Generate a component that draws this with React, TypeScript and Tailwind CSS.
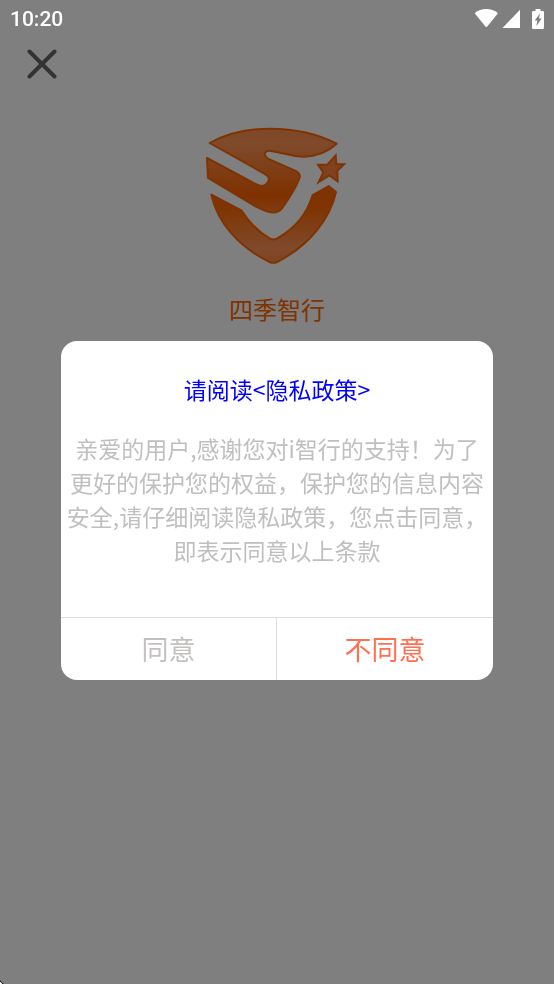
import { useState } from 'react'

const StatusBar = () => (
  <div className="relative z-20 flex h-[38px] items-center justify-between px-[10px] text-white">
    <span className="font-['Roboto',sans-serif] text-[21px] font-medium leading-[38px]">10:20</span>
    <svg className="h-5 w-[70px]" viewBox="0 0 70 20" fill="currentColor" aria-hidden="true">
      <path d="M0.7 4.2C4 1.3 8 0 12.3 0S20.5 1.3 24 4.2L13 17.8Q12.3 18.5 11.6 17.8Z" />
      <path d="M46 0.8V19H28.5Z" />
      <path
        fillRule="evenodd"
        d="M61.5 0H66.5V2H68.8Q70 2 70 3.2V18.8Q70 20 68.8 20H59.2Q58 20 58 18.8V3.2Q58 2 59.2 2H61.5ZM66 4.5L60.7 11.6H63.4L62.4 17.2L67.6 9.6H64.9Z"
      />
    </svg>
  </div>
)

const Logo = () => (
  <svg className="h-[138px] w-[142px]" viewBox="48 36 426 414" role="img" aria-label="四季智行">
    <defs>
      <linearGradient id="swoosh" gradientUnits="userSpaceOnUse" x1="0" y1="40" x2="0" y2="292">
        <stop offset="0" stopColor="#ff9250" />
        <stop offset="0.2" stopColor="#ff9456" />
        <stop offset="0.8" stopColor="#ff6200" />
        <stop offset="1" stopColor="#ff7a2a" />
      </linearGradient>
      <linearGradient id="base" gradientUnits="userSpaceOnUse" x1="0" y1="212" x2="0" y2="446">
        <stop offset="0" stopColor="#ff6600" />
        <stop offset="0.25" stopColor="#ff6600" />
        <stop offset="0.8" stopColor="#ff9456" />
        <stop offset="1" stopColor="#ff8a48" />
      </linearGradient>
    </defs>
    <g stroke="#ff6600" strokeWidth="6" strokeLinejoin="round">
      <path
        fill="url(#swoosh)"
        d="M59 84C112 54 176 41 241 41C315 41 382 56 440 86C414 110 380 124 340 125C326 125 314 123 302 120L248 109C232 105 223 110 225 121C227 128 232 131 240 134L315 167C328 173 332 181 328 191C316 221 297 251 276 280C267 291 253 295 235 290C222 287 210 281 198 275L54 189L51 129L196 207C212 216 226 213 233 202C240 190 236 183 225 177Z"
      />
      <path
        fill="url(#base)"
        d="M64 239L154 286C180 326 206 352 240 371Q251 376 262 370C318 337 350 298 368 240L416 213L438 231C421 311 356 393 261 441Q250 446 239 441C145 396 82 321 64 239Z"
      />
      <path
        fill="#ff8240"
        strokeLinejoin="miter"
        d="M437 121L439 148H462L442 167L443 199L418 181L386 201L400 172L384 149H412Z"
      />
    </g>
  </svg>
)

type PrivacyDialogProps = {
  onAnswer: (agreed: boolean) => void
}

const PrivacyDialog = ({ onAnswer }: PrivacyDialogProps) => (
  <div className="fixed inset-0 z-10 flex items-center justify-center bg-black/50 pt-[37px]">
    <div
      role="dialog"
      aria-modal="true"
      aria-labelledby="privacy-title"
      className="w-[78%] overflow-hidden rounded-2xl bg-white text-center"
    >
      <h2 id="privacy-title" className="pt-[31px] text-[23px] leading-[34px]">
        <a href="#privacy" className="text-[#0000ff]">
          请阅读&lt;隐私政策&gt;
        </a>
      </h2>
      <p className="px-1 pb-[50px] pt-[25px] text-[23px] leading-[34px] text-[#bfbfbf]">
        亲爱的用户,感谢您对i智行的支持！为了更好的保护您的权益，保护您的信息内容安全,请仔细阅读隐私政策，您点击同意，即表示同意以上条款
      </p>
      <div className="grid grid-cols-2 border-t border-[#dddddd] text-[27px] leading-[62px]">
        <button type="button" onClick={() => onAnswer(true)} className="border-r border-[#dddddd] text-[#c4c0c0]">
          同意
        </button>
        <button type="button" onClick={() => onAnswer(false)} className="text-[#ff7050]">
          不同意
        </button>
      </div>
    </div>
  </div>
)

const App = () => {
  const [open, setOpen] = useState(true)

  return (
    <main className="relative min-h-screen bg-white font-['Noto_Sans_CJK_SC',sans-serif]">
      <StatusBar />
      <header className="flex h-[89px] items-start px-[27px] pt-[11px]">
        <button type="button" aria-label="关闭" className="text-[#666666]">
          <svg className="h-[30px] w-[30px]" viewBox="0 0 30 30" stroke="currentColor" strokeWidth="4" strokeLinecap="round">
            <path d="M2.5 2.5L27.5 27.5M27.5 2.5L2.5 27.5" />
          </svg>
        </button>
      </header>
      <section className="flex flex-col items-center">
        <Logo />
        <h1 className="mt-[26px] text-2xl leading-9 text-[#ff6600]">四季智行</h1>
      </section>

      {open && <PrivacyDialog onAnswer={() => setOpen(false)} />}

      {/* rounded screen corner */}
      <svg className="absolute bottom-0 left-0 z-20 h-1 w-1" viewBox="0 0 4 4" aria-hidden="true">
        <path d="M0 1L3 4H0Z" fill="#ffffff" />
        <path d="M0 0.5Q1 3 3.5 4" fill="none" stroke="#000000" />
      </svg>
    </main>
  )
}

export default App
